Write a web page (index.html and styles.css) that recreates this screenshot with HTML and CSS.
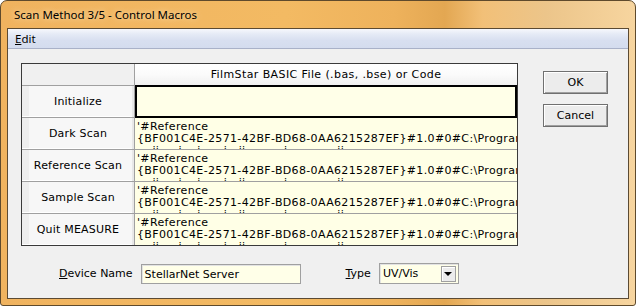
FILE: index.html
```html
<!DOCTYPE html>
<html lang="en">
<head>
    <meta charset="UTF-8">
    <title>Scan Method 3/5 - Control Macros</title>
    <link rel="stylesheet" href="styles.css">
</head>
<body>
    <div class="window">
        <div class="titlebar">Scan Method 3/5 - Control Macros</div>

        <div class="client">
            <div class="menubar">
                <span class="menu-item"><u>E</u>dit</span>
            </div>

            <div class="dialog-body">
                <div class="top-row">
                    <!-- Macro grid -->
                    <div class="macro-grid">
                        <div class="corner"></div>
                        <div class="col-head">FilmStar BASIC File (.bas, .bse) or Code</div>

                        <div class="row-head">Initialize</div>
                        <div class="cell editing"></div>

                        <div class="row-head">Dark Scan</div>
                        <div class="cell">'#Reference
{BF001C4E-2571-42BF-BD68-0AA6215287EF}#1.0#0#C:\Program Files\FTG\Basic
    ii     i    i      i   ii          i             ii</div>

                        <div class="row-head">Reference Scan</div>
                        <div class="cell">'#Reference
{BF001C4E-2571-42BF-BD68-0AA6215287EF}#1.0#0#C:\Program Files\FTG\Basic
    ii     i    i      i   ii          i             ii</div>

                        <div class="row-head">Sample Scan</div>
                        <div class="cell">'#Reference
{BF001C4E-2571-42BF-BD68-0AA6215287EF}#1.0#0#C:\Program Files\FTG\Basic
    ii     i    i      i   ii          i             ii</div>

                        <div class="row-head">Quit MEASURE</div>
                        <div class="cell">'#Reference
{BF001C4E-2571-42BF-BD68-0AA6215287EF}#1.0#0#C:\Program Files\FTG\Basic
    ii     i    i      i   ii          i             ii</div>
                    </div>

                    <div class="buttons">
                        <button class="btn">OK</button>
                        <button class="btn">Cancel</button>
                    </div>
                </div>

                <div class="fields">
                    <label class="field-label"><u>D</u>evice Name</label>
                    <div class="textbox">StellarNet Server</div>

                    <label class="field-label type-label"><u>T</u>ype</label>
                    <div class="combo">
                        <span class="combo-text">UV/Vis</span>
                        <span class="drop-btn"><span class="arrow"></span></span>
                    </div>
                </div>
            </div>
        </div>
    </div>
</body>
</html>
```

FILE: styles.css
```css
body {
    margin: 0;
    background: #ffffff;
    font-family: "DejaVu Sans", Verdana, sans-serif;
    font-size: 11px;
}
.window {
    width: 636px;
    height: 306px;
    box-sizing: border-box;
    border: 1px solid #5f4a2c;
    border-radius: 7px 7px 3px 3px;
    padding: 0 6px 6px 6px;
    background: linear-gradient(to right, #f0b35f 0%, #f3ba63 45%, #eeb25c 62%, #e3a752 70%, #f2c078 76%, #ecc58a 86%, #f7d59f 100%);
    display: flex;
    flex-direction: column;
}
.titlebar {
    height: 27px;
    line-height: 28px;
    padding-left: 7px;
    font-family: "Noto Sans", "Open Sans", sans-serif;
    font-size: 11.5px;
    color: #000;
    text-shadow: 0 0 6px rgba(255, 240, 210, 0.9);
}
.client {
    flex: 1;
    border: 1px solid #5b4a33;
    background: #f0f0f0;
    display: flex;
    flex-direction: column;
}
.menubar {
    height: 19px;
    border-bottom: 1px solid #a9b1c8;
    background: linear-gradient(#f7f8fc 0%, #e6ebf6 25%, #d8dff0 60%, #d4dcee 100%);
    font-family: "Noto Sans", "Open Sans", sans-serif;
    font-size: 11.5px;
    display: flex;
    align-items: center;
}
.menu-item {
    padding: 0 6px 0 7px;
}
.dialog-body {
    padding: 14px 0 0 13px;
}
.top-row {
    display: flex;
    align-items: flex-start;
}
/* Grid of macro rows */
.macro-grid {
    display: grid;
    grid-template-columns: 112px 382px;
    grid-template-rows: 21px repeat(5, 31px);
    gap: 1px;
    border: 1px solid #3a3a3a;
    background: #a0a0a0;
}
.corner {
    background: #f0f0f0;
}
.col-head {
    background: linear-gradient(#ffffff 0%, #fbfbfb 50%, #f0f0f0 100%);
    text-align: center;
    line-height: 21px;
    letter-spacing: 0.4px;
}
.row-head {
    background: linear-gradient(to right, #eeeeee 0 7px, #f7f7f7 7px);
    box-shadow: inset -2px 0 #e8e8e8, inset 0 -1px #ffffff;
    display: flex;
    align-items: center;
    justify-content: center;
    letter-spacing: 0.2px;
}
.cell {
    background: #ffffe6;
    white-space: pre;
    overflow: hidden;
    line-height: 12px;
    padding: 3px 0 0 2px;
    letter-spacing: 0.35px;
}
.cell.editing {
    border: 2px solid #000;
    margin: -1px 0 -1px 0;
    padding: 0;
    background: #ffffe8;
}
.buttons {
    margin: 8px 0 0 25px;
    display: flex;
    flex-direction: column;
    gap: 10px;
}
.btn {
    width: 65px;
    height: 23px;
    font-family: "DejaVu Sans", Verdana, sans-serif;
    font-size: 11px;
    color: #000;
    background: #ececec;
    border: 1px solid #707070;
    box-shadow: inset 1px 1px #ffffff, inset -1px -1px #a0a0a0;
    padding: 0;
}
/* Bottom fields */
.fields {
    display: flex;
    align-items: center;
    margin: 17px 0 0 38px;
}
.field-label {
    margin-right: 8px;
}
.type-label {
    margin-left: 45px;
}
.textbox {
    width: 160px;
    height: 20px;
    box-sizing: border-box;
    border: 1px solid #a0a0a0;
    box-shadow: inset 1px 1px #e3e3e3;
    background: #ffffe8;
    padding: 3px 0 0 3px;
}
.combo {
    width: 80px;
    height: 21px;
    box-sizing: border-box;
    border: 1px solid #a0a0a0;
    box-shadow: inset 1px 1px #e3e3e3;
    background: #ffffe8;
    display: flex;
    align-items: center;
    justify-content: space-between;
    padding: 0 2px 0 3px;
}
.drop-btn {
    width: 13px;
    height: 14px;
    background: #ececec;
    border: 1px solid #a0a0a0;
    box-shadow: inset 1px 1px #ffffff;
    display: flex;
    align-items: center;
    justify-content: center;
}
.arrow {
    width: 0;
    height: 0;
    border-left: 4px solid transparent;
    border-right: 4px solid transparent;
    border-top: 4px solid #000;
}
```
